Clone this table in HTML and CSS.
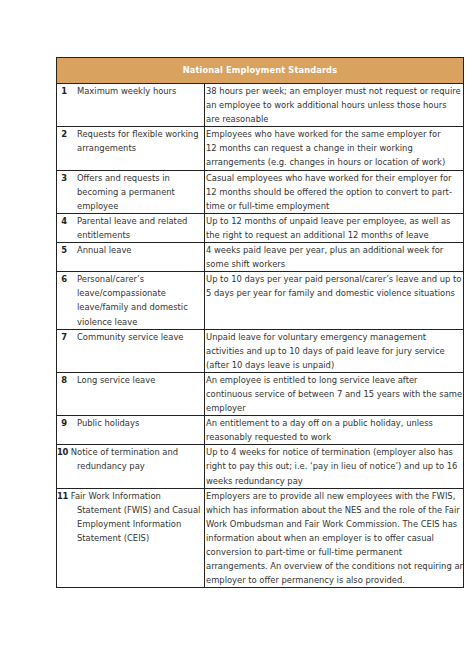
FILE: index.html
```html
<!DOCTYPE html>
<html>
<head>
<meta charset="utf-8">
<link rel="stylesheet" href="styles.css">
</head>
<body>
<div class="page">
<table class="nes">
  <colgroup><col class="c1"><col class="c2"></colgroup>
  <tr><th colspan="2" class="head">National Employment Standards</th></tr>
  <tr>
    <td class="lc"><div class="lt"><span class="num">1</span>Maximum weekly hours</div></td>
    <td class="rc">38 hours per week; an employer must not request or require<br>an employee to work additional hours unless those hours<br>are reasonable</td>
  </tr>
  <tr>
    <td class="lc"><div class="lt"><span class="num">2</span>Requests for flexible working<br>arrangements</div></td>
    <td class="rc">Employees who have worked for the same employer for<br>12 months can request a change in their working<br>arrangements (e.g. changes in hours or location of work)</td>
  </tr>
  <tr>
    <td class="lc"><div class="lt"><span class="num">3</span>Offers and requests in<br>becoming a permanent<br>employee</div></td>
    <td class="rc">Casual employees who have worked for their employer for<br>12 months should be offered the option to convert to part-<br>time or full-time employment</td>
  </tr>
  <tr>
    <td class="lc"><div class="lt"><span class="num">4</span>Parental leave and related<br>entitlements</div></td>
    <td class="rc">Up to 12 months of unpaid leave per employee, as well as<br>the right to request an additional 12 months of leave</td>
  </tr>
  <tr>
    <td class="lc"><div class="lt"><span class="num">5</span>Annual leave</div></td>
    <td class="rc">4 weeks paid leave per year, plus an additional week for<br>some shift workers</td>
  </tr>
  <tr>
    <td class="lc"><div class="lt"><span class="num">6</span>Personal/carer’s<br>leave/compassionate<br>leave/family and domestic<br>violence leave</div></td>
    <td class="rc">Up to 10 days per year paid personal/carer’s leave and up to<br>5 days per year for family and domestic violence situations</td>
  </tr>
  <tr>
    <td class="lc"><div class="lt"><span class="num">7</span>Community service leave</div></td>
    <td class="rc">Unpaid leave for voluntary emergency management<br>activities and up to 10 days of paid leave for jury service<br>(after 10 days leave is unpaid)</td>
  </tr>
  <tr>
    <td class="lc"><div class="lt"><span class="num">8</span>Long service leave</div></td>
    <td class="rc">An employee is entitled to long service leave after<br>continuous service of between 7 and 15 years with the same<br>employer</td>
  </tr>
  <tr>
    <td class="lc"><div class="lt"><span class="num">9</span>Public holidays</div></td>
    <td class="rc">An entitlement to a day off on a public holiday, unless<br>reasonably requested to work</td>
  </tr>
  <tr>
    <td class="lc"><div class="lt"><span class="num n2">10</span>Notice of termination and<br>redundancy pay</div></td>
    <td class="rc">Up to 4 weeks for notice of termination (employer also has<br>right to pay this out; i.e. ‘pay in lieu of notice’) and up to 16<br>weeks redundancy pay</td>
  </tr>
  <tr>
    <td class="lc"><div class="lt"><span class="num n2">11</span>Fair Work Information<br>Statement (FWIS) and Casual<br>Employment Information<br>Statement (CEIS)</div></td>
    <td class="rc">Employers are to provide all new employees with the FWIS,<br>which has information about the NES and the role of the Fair<br>Work Ombudsman and Fair Work Commission. The CEIS has<br>information about when an employer is to offer casual<br>conversion to part-time or full-time permanent<br>arrangements. An overview of the conditions not requiring an<br>employer to offer permanency is also provided.</td>
  </tr>
</table>
</div>
</body>
</html>
```
FILE: styles.css
```css
html, body {
  margin: 0;
  padding: 0;
  background: #ffffff;
}
.page {
  padding: 57px 0 0 56px;
  font-family: "DejaVu Sans", Verdana, sans-serif;
  color: #333333;
}
.nes {
  border-collapse: collapse;
  width: 407px;
  table-layout: fixed;
  font-size: 8.4px;
  line-height: 14.1px;
}
.c1 { width: 148px; }
.c2 { width: 259px; }
.nes td, .nes th {
  border: 1px solid #222;
  vertical-align: top;
  padding: 0;
  text-align: left;
  white-space: nowrap;
  overflow: hidden;
}
.nes th.head {
  background: #d9a25e;
  color: #fff;
  font-weight: bold;
  text-align: center;
  vertical-align: middle;
  height: 25px;
  font-size: 8.3px;
  letter-spacing: 0.1px;
}
.lt {
  padding-left: 20px;
  text-indent: -20px;
}
.num {
  display: inline-block;
  width: 20px;
  padding-right: 10px;
  box-sizing: border-box;
  text-align: right;
  text-indent: 0;
  font-weight: bold;
  color: #222;
}
.num.n2 {
  width: auto;
  padding-right: 3px;
  text-align: left;
  letter-spacing: -0.4px;
}
.rc {
  padding-left: 1px !important;
}
```
